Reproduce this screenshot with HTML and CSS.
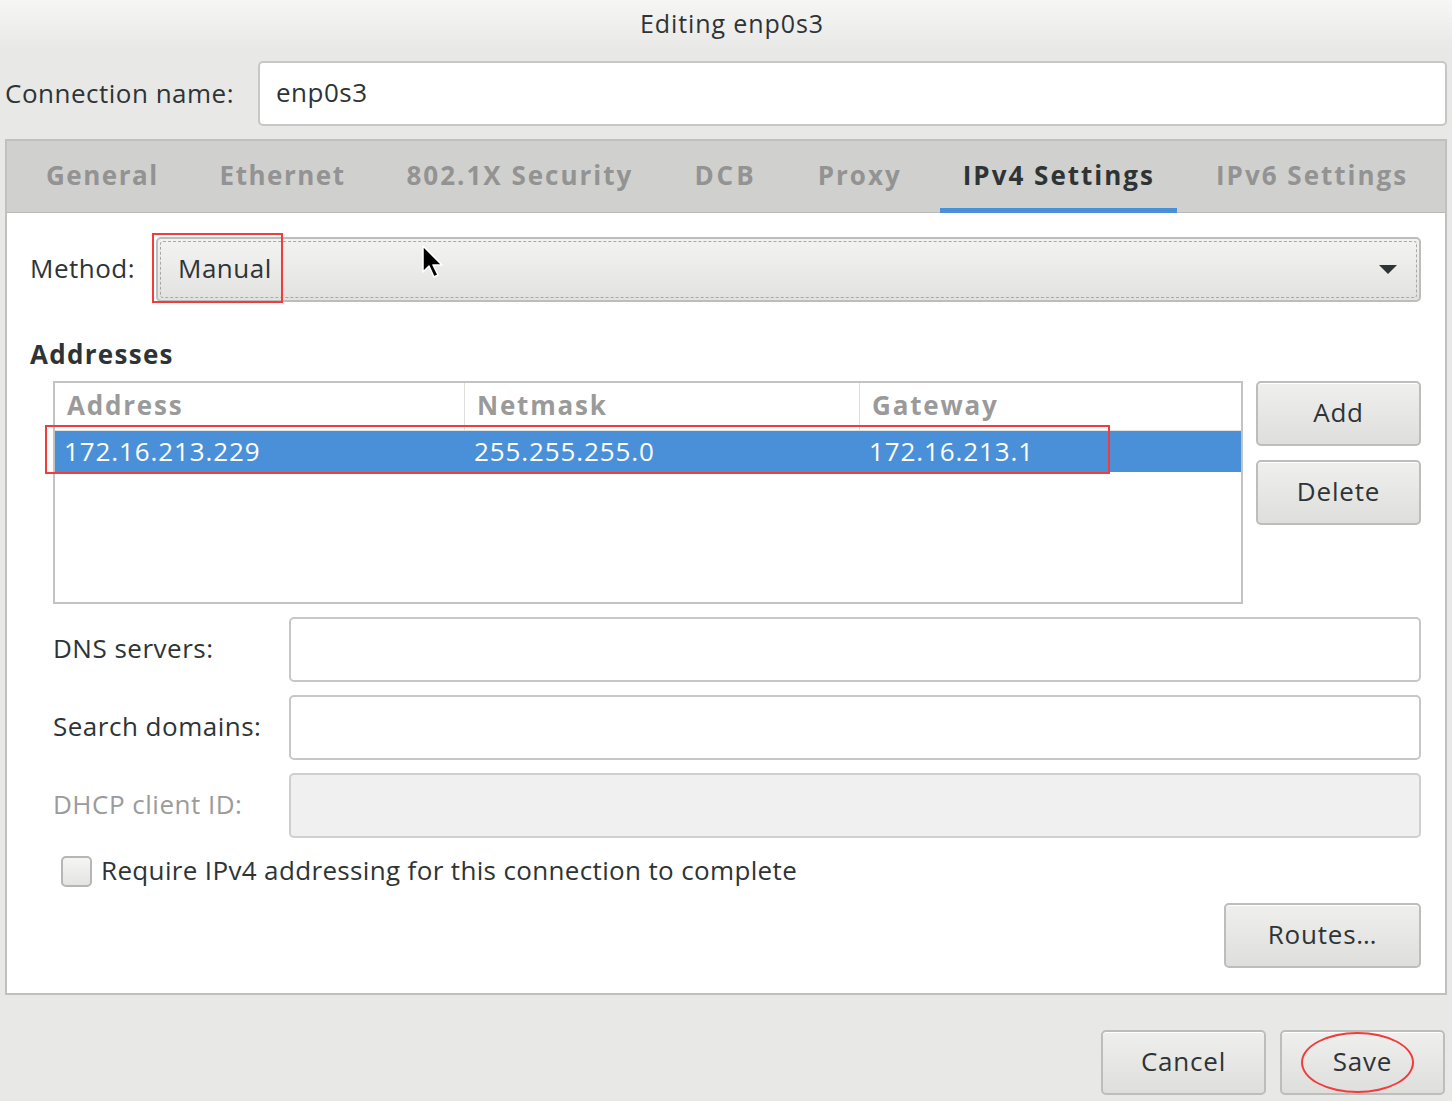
FILE: index.html
```html
<!DOCTYPE html>
<html lang="en">
<head>
<meta charset="utf-8">
<title>Editing enp0s3</title>
<link rel="stylesheet" href="styles.css">
</head>
<body>
<div class="dialog">
  <header class="titlebar">Editing enp0s3</header>

  <div class="conn-row">
    <label class="conn-label">Connection name:</label>
    <div class="entry conn-entry">enp0s3</div>
  </div>

  <section class="notebook">
    <nav class="tabs">
      <div class="tab">General</div>
      <div class="tab">Ethernet</div>
      <div class="tab">802.1X Security</div>
      <div class="tab tab-wide">DCB</div>
      <div class="tab">Proxy</div>
      <div class="tab active">IPv4 Settings</div>
      <div class="tab">IPv6 Settings</div>
    </nav>

    <div class="page">
      <div class="method-row">
        <span class="method-label">Method:</span>
        <div class="combo">
          <span class="combo-text">Manual</span>
          <svg class="combo-arrow" width="18" height="10" viewBox="0 0 18 10"><path d="M0 0h18L9 9z" fill="#2e3436"/></svg>
          <span class="annot-rect method-annot"></span>
          <svg class="cursor" width="24" height="36" viewBox="0 0 24 36"><path d="M2 1v26l6-6 5 11 4-2-5-10h9z" fill="#000" stroke="#fff" stroke-width="1.5" stroke-linejoin="round"/></svg>
        </div>
      </div>

      <h3 class="section-title">Addresses</h3>

      <div class="addr-wrap">
        <div class="addr-table">
          <div class="addr-head">
            <div class="col c1">Address</div>
            <div class="col c2">Netmask</div>
            <div class="col c3">Gateway</div>
          </div>
          <div class="addr-row selected">
            <div class="cell c1">172.16.213.229</div>
            <div class="cell c2">255.255.255.0</div>
            <div class="cell c3">172.16.213.1</div>
          </div>
          <span class="annot-rect row-annot"></span>
        </div>
        <div class="addr-buttons">
          <button class="btn">Add</button>
          <button class="btn">Delete</button>
        </div>
      </div>

      <div class="form-grid">
        <label class="f-label">DNS servers:</label>
        <div class="entry"></div>
        <label class="f-label">Search domains:</label>
        <div class="entry"></div>
        <label class="f-label disabled">DHCP client ID:</label>
        <div class="entry entry-disabled"></div>
      </div>

      <div class="check-row">
        <span class="checkbox"></span>
        <span class="check-label">Require IPv4 addressing for this connection to complete</span>
      </div>

      <div class="routes-row">
        <button class="btn btn-routes">Routes…</button>
      </div>
    </div>
  </section>

  <footer class="actions">
    <button class="btn btn-action">Cancel</button>
    <button class="btn btn-action save">Save<span class="annot-ellipse"></span></button>
  </footer>
</div>
</body>
</html>
```

FILE: styles.css
```css
* { box-sizing: border-box; }

html, body {
  margin: 0;
  padding: 0;
}

body {
  background: #e8e8e7;
  font-family: "Open Sans", "DejaVu Sans", sans-serif;
  font-size: 26px;
  line-height: 1.2;
  letter-spacing: 0.5px;
  color: #2e3436;
  width: 1452px;
  height: 1101px;
  overflow: hidden;
}

.dialog {
  display: flex;
  flex-direction: column;
}

.titlebar {
  height: 50px;
  display: flex;
  align-items: center;
  justify-content: center;
  background: linear-gradient(#f6f6f5, #e8e8e7);
  color: #2e3436;
  font-size: 25px;
  letter-spacing: 0.9px;
  padding: 0 0 4px 12px;
}

.conn-row {
  display: flex;
  align-items: center;
  padding: 11px 5px 0 5px;
}

.conn-label {
  width: 253px;
  flex: none;
  padding-bottom: 0;
}

.entry {
  height: 65px;
  background: #fff;
  border: 2px solid #c7c7c5;
  border-radius: 5px;
  display: flex;
  align-items: center;
  padding: 0 0 1px 16px;
}

.conn-entry {
  flex: 1;
}

.entry-disabled {
  background: #f0f0f0;
  border-color: #cfcfcd;
}

/* notebook */
.notebook {
  margin: 13px 5px 0 5px;
  border: 2px solid #c0c0be;
  background: #fff;
}

.tabs {
  height: 72px;
  background: #d0d0ce;
  border-bottom: 1px solid #b9b9b7;
  display: flex;
  padding-left: 8px;
}

.tab {
  margin: 0 8px;
  padding: 0 22px 1px 23px;
  display: flex;
  align-items: center;
  font-weight: 700;
  color: #939393;
  letter-spacing: 2px;
  position: relative;
  white-space: nowrap;
}

.tab:nth-child(1),
.tab:nth-child(2) {
  letter-spacing: 1.5px;
}

.tab.tab-wide {
  letter-spacing: 3px;
}

.tab.active {
  color: #2e3436;
}

.tab.active::after {
  content: "";
  position: absolute;
  left: 0;
  right: 0;
  bottom: -1px;
  height: 5px;
  background: #4a90d9;
}

.page {
  padding: 24px 24px 25px 23px;
  display: flex;
  flex-direction: column;
}

/* method */
.method-row {
  display: flex;
  align-items: center;
  height: 65px;
}

.method-label {
  width: 126px;
  flex: none;
  padding-bottom: 1px;
}

.combo {
  position: relative;
  flex: 1;
  height: 65px;
  border: 2px solid #bdbdbb;
  border-radius: 5px;
  background: linear-gradient(#f3f3f2, #e2e2e0);
  display: flex;
  align-items: center;
  padding-left: 20px;
}

.combo-text {
  padding-bottom: 1px;
}

.combo::after {
  content: "";
  position: absolute;
  inset: 2px;
  border: 1px dashed #a8a8a6;
  border-radius: 3px;
  pointer-events: none;
}

.combo-arrow {
  margin-left: auto;
  margin-right: 22px;
}

.annot-rect {
  position: absolute;
  border: 2px solid #f23c3c;
  pointer-events: none;
  z-index: 2;
}

.method-annot {
  left: -6px;
  top: -6px;
  width: 131px;
  height: 70px;
}

.cursor {
  position: absolute;
  left: 263px;
  top: 6px;
  z-index: 3;
}

.section-title {
  margin: 37px 0 0 0;
  font-size: 26px;
  font-weight: 700;
  letter-spacing: 1.3px;
  line-height: 30px;
}

/* addresses */
.addr-wrap {
  display: flex;
  gap: 13px;
  margin: 12px 0 0 23px;
}

.addr-table {
  position: relative;
  width: 1190px;
  height: 223px;
  border: 2px solid #c3c3c1;
  background: #fff;
}

.addr-head {
  display: flex;
  height: 48px;
  border-bottom: 1px solid #e2e2e0;
}

.col, .cell {
  display: flex;
  align-items: center;
  white-space: nowrap;
}

.col {
  color: #9a9a9a;
  font-weight: 700;
  letter-spacing: 1.8px;
  border-right: 1px solid #dededc;
  padding: 0 0 2px 12px;
}

.col.c3 { border-right: none; }

.c1 { width: 410px; }
.c2 { width: 395px; }
.c3 { flex: 1; }

.addr-row {
  display: flex;
  height: 41px;
}

.addr-row.selected {
  background: #4a90d9;
  color: #fff;
}

.cell {
  padding-left: 9px;
  letter-spacing: 0.9px;
}

.row-annot {
  left: -10px;
  top: 42px;
  width: 1065px;
  height: 49px;
}

.addr-buttons {
  display: flex;
  flex-direction: column;
  gap: 14px;
}

.btn {
  font-family: inherit;
  font-size: 26px;
  letter-spacing: 0.8px;
  color: #2e3436;
  width: 165px;
  height: 65px;
  border: 2px solid #bdbdbb;
  border-radius: 5px;
  background: linear-gradient(#efefee, #dededc);
  box-shadow: inset 0 1px #fff;
  padding: 0 0 3px 0;
}

/* form */
.form-grid {
  display: grid;
  grid-template-columns: 236px 1fr;
  row-gap: 13px;
  align-items: center;
  margin: 13px 0 0 23px;
}

.f-label {
  padding-bottom: 1px;
}

.f-label.disabled {
  color: #9b9b9b;
}

.check-row {
  display: flex;
  align-items: center;
  gap: 9px;
  margin: 18px 0 0 31px;
  height: 31px;
}

.check-label {
  padding-bottom: 1px;
  letter-spacing: 0.35px;
}

.checkbox {
  width: 31px;
  height: 31px;
  border: 2px solid #b6b6b4;
  border-radius: 5px;
  background: linear-gradient(#f5f5f4, #e4e4e2);
}

.routes-row {
  display: flex;
  justify-content: flex-end;
  margin-top: 16px;
}

.btn-routes {
  width: 197px;
}

/* actions */
.actions {
  display: flex;
  justify-content: flex-end;
  gap: 14px;
  padding: 35px 7px 0 0;
}

.save {
  position: relative;
}

.annot-ellipse {
  position: absolute;
  left: 19px;
  top: 0;
  width: 113px;
  height: 61px;
  border: 2px solid #f23c3c;
  border-radius: 50%;
}
```
